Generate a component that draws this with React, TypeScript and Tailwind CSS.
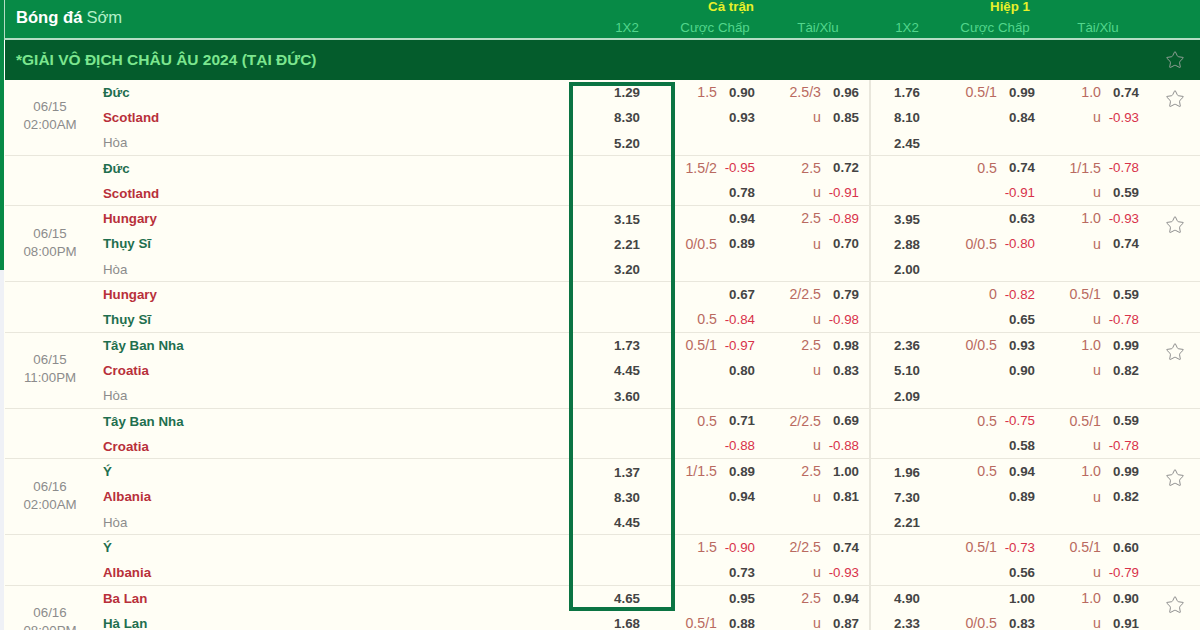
import { Star } from "lucide-react"

type Line = [string, string]

interface Match {
  date?: string
  time?: string
  star?: boolean
  teams: [string, "home" | "away" | "draw"][]
  odds: string[]
  hcp: Line[]
  ou: Line[]
  odds1: string[]
  hcp1: Line[]
  ou1: Line[]
}

const matches: Match[] = [
  {
    date: "06/15", time: "02:00AM", star: true,
    teams: [["Đức", "home"], ["Scotland", "away"], ["Hòa", "draw"]],
    odds: ["1.29", "8.30", "5.20"],
    hcp: [["1.5", "0.90"], ["", "0.93"]],
    ou: [["2.5/3", "0.96"], ["u", "0.85"]],
    odds1: ["1.76", "8.10", "2.45"],
    hcp1: [["0.5/1", "0.99"], ["", "0.84"]],
    ou1: [["1.0", "0.74"], ["u", "-0.93"]],
  },
  {
    teams: [["Đức", "home"], ["Scotland", "away"]],
    odds: [],
    hcp: [["1.5/2", "-0.95"], ["", "0.78"]],
    ou: [["2.5", "0.72"], ["u", "-0.91"]],
    odds1: [],
    hcp1: [["0.5", "0.74"], ["", "-0.91"]],
    ou1: [["1/1.5", "-0.78"], ["u", "0.59"]],
  },
  {
    date: "06/15", time: "08:00PM", star: true,
    teams: [["Hungary", "away"], ["Thụy Sĩ", "home"], ["Hòa", "draw"]],
    odds: ["3.15", "2.21", "3.20"],
    hcp: [["", "0.94"], ["0/0.5", "0.89"]],
    ou: [["2.5", "-0.89"], ["u", "0.70"]],
    odds1: ["3.95", "2.88", "2.00"],
    hcp1: [["", "0.63"], ["0/0.5", "-0.80"]],
    ou1: [["1.0", "-0.93"], ["u", "0.74"]],
  },
  {
    teams: [["Hungary", "away"], ["Thụy Sĩ", "home"]],
    odds: [],
    hcp: [["", "0.67"], ["0.5", "-0.84"]],
    ou: [["2/2.5", "0.79"], ["u", "-0.98"]],
    odds1: [],
    hcp1: [["0", "-0.82"], ["", "0.65"]],
    ou1: [["0.5/1", "0.59"], ["u", "-0.78"]],
  },
  {
    date: "06/15", time: "11:00PM", star: true,
    teams: [["Tây Ban Nha", "home"], ["Croatia", "away"], ["Hòa", "draw"]],
    odds: ["1.73", "4.45", "3.60"],
    hcp: [["0.5/1", "-0.97"], ["", "0.80"]],
    ou: [["2.5", "0.98"], ["u", "0.83"]],
    odds1: ["2.36", "5.10", "2.09"],
    hcp1: [["0/0.5", "0.93"], ["", "0.90"]],
    ou1: [["1.0", "0.99"], ["u", "0.82"]],
  },
  {
    teams: [["Tây Ban Nha", "home"], ["Croatia", "away"]],
    odds: [],
    hcp: [["0.5", "0.71"], ["", "-0.88"]],
    ou: [["2/2.5", "0.69"], ["u", "-0.88"]],
    odds1: [],
    hcp1: [["0.5", "-0.75"], ["", "0.58"]],
    ou1: [["0.5/1", "0.59"], ["u", "-0.78"]],
  },
  {
    date: "06/16", time: "02:00AM", star: true,
    teams: [["Ý", "home"], ["Albania", "away"], ["Hòa", "draw"]],
    odds: ["1.37", "8.30", "4.45"],
    hcp: [["1/1.5", "0.89"], ["", "0.94"]],
    ou: [["2.5", "1.00"], ["u", "0.81"]],
    odds1: ["1.96", "7.30", "2.21"],
    hcp1: [["0.5", "0.94"], ["", "0.89"]],
    ou1: [["1.0", "0.99"], ["u", "0.82"]],
  },
  {
    teams: [["Ý", "home"], ["Albania", "away"]],
    odds: [],
    hcp: [["1.5", "-0.90"], ["", "0.73"]],
    ou: [["2/2.5", "0.74"], ["u", "-0.93"]],
    odds1: [],
    hcp1: [["0.5/1", "-0.73"], ["", "0.56"]],
    ou1: [["0.5/1", "0.60"], ["u", "-0.79"]],
  },
  {
    date: "06/16", time: "08:00PM", star: true,
    teams: [["Ba Lan", "away"], ["Hà Lan", "home"], ["Hòa", "draw"]],
    odds: ["4.65", "1.68"],
    hcp: [["", "0.95"], ["0.5/1", "0.88"]],
    ou: [["2.5", "0.94"], ["u", "0.87"]],
    odds1: ["4.90", "2.33"],
    hcp1: [["", "1.00"], ["0/0.5", "0.83"]],
    ou1: [["1.0", "0.90"], ["u", "0.91"]],
  },
]

const teamColor = {
  home: "font-bold text-[#1f6f4f]",
  away: "font-bold text-[#b8303a]",
  draw: "text-[#8c8c8c]",
}

const Cell = ({ className, children }: { className: string; children?: React.ReactNode }) => (
  <div className={`flex h-[25.3px] shrink-0 items-center ${className}`}>{children}</div>
)

const Price = ({ value }: { value: string }) => (
  <span className={value.startsWith("-") ? "text-[#d8324a]" : "font-bold text-[#444444]"}>{value}</span>
)

const LinePair = ({ lines, lineWidth }: { lines: Line[]; lineWidth: string }) => (
  <div className="flex shrink-0 flex-col">
    {lines.map(([line, price], i) => (
      <div key={i} className="flex h-[25.3px] items-center">
        <span className={`${lineWidth} text-right text-[14.2px] text-[#b96a60]`}>{line}</span>
        <span className="w-[38px] text-right">
          <Price value={price} />
        </span>
      </div>
    ))}
  </div>
)

const OddsColumn = ({ values, width }: { values: string[]; width: string }) => (
  <div className={`flex shrink-0 flex-col pt-[0.5px] ${width}`}>
    {values.map((v, i) => (
      <Cell key={i} className="justify-center font-bold text-[#444444]">{v}</Cell>
    ))}
  </div>
)

const MatchRow = ({ match }: { match: Match }) => (
  <div className={`flex border-b border-[#e9e7dc] ${match.teams.length === 3 ? "h-[75.9px]" : "h-[50.6px]"}`}>
    <div className="flex w-[90px] shrink-0 flex-col items-center justify-center pb-[2px] leading-[18px] text-[#8c8c8c]">
      <span>{match.date}</span>
      <span>{match.time}</span>
    </div>
    <div className="flex w-[487px] shrink-0 flex-col pl-[8px]">
      {match.teams.map(([name, side], i) => (
        <Cell key={i} className={teamColor[side]}>{name}</Cell>
      ))}
    </div>
    <OddsColumn values={match.odds} width="w-[90px]" />
    <LinePair lines={match.hcp} lineWidth="w-[45px]" />
    <LinePair lines={match.ou} lineWidth="w-[66px]" />
    <div className="w-[12px] shrink-0 border-r-2 border-[#e9e7dc]" />
    <OddsColumn values={match.odds1} width="w-[72px]" />
    <LinePair lines={match.hcp1} lineWidth="w-[54px]" />
    <LinePair lines={match.ou1} lineWidth="w-[66px]" />
    <div className="flex flex-1 justify-center pl-[11px] pt-[9px]">
      {match.star && <Star size={20} strokeWidth={1.2} className="text-[#8f8f8f]" />}
    </div>
  </div>
)

export default function App() {
  return (
    <div className="relative flex h-[630px] w-[1200px] overflow-hidden bg-[#eff1f6] font-['Liberation_Sans',Arial,sans-serif] text-[13.3px]">
      <div className="h-[270px] w-[4px] shrink-0 bg-[#078a46]" />
      <div className="flex-1 bg-[#fffef5]">
        <div className="flex h-[40px] border-b-2 border-l border-[#b4dcc4] bg-[#078a46]">
          <div className="flex w-[577px] shrink-0 items-center pb-[2px] pl-[11px] text-[16.6px]">
            <span className="font-bold text-white">Bóng đá</span>
            <span className="ml-[4px] text-[#b4f0c8]">Sớm</span>
          </div>
          <div className="flex flex-1 flex-col">
            <div className="flex h-[13px] items-center font-bold text-[#e8f02a]">
              <span className="w-[298px] text-center">Cả trận</span>
              <span className="w-[260px] text-center">Hiệp 1</span>
            </div>
            <div className="mt-[6px] flex h-[18px] items-center text-[#52d68c]">
              <span className="w-[90px] text-center">1X2</span>
              <span className="w-[86px] text-center">Cược Chấp</span>
              <span className="w-[120px] text-center">Tài/Xỉu</span>
              <span className="w-[58px] text-center">1X2</span>
              <span className="w-[118px] text-center">Cược Chấp</span>
              <span className="w-[88px] text-center">Tài/Xỉu</span>
            </div>
          </div>
        </div>
        <div className="flex h-[40px] items-center justify-between border-l border-white bg-[#045c2c] pl-[11px] pr-[15px]">
          <span className="text-[15.5px] font-bold text-[#7ce68f]">*GIẢI VÔ ĐỊCH CHÂU ÂU 2024 (TẠI ĐỨC)</span>
          <Star size={20} strokeWidth={1.2} className="text-[#8f9f95]" />
        </div>
        <div className="pl-[1px]">
          {matches.map((m, i) => (
            <MatchRow key={i} match={m} />
          ))}
        </div>
      </div>
      {/* highlight around the full-time 1X2 column */}
      <div className="pointer-events-none absolute left-[569px] top-[82px] h-[529px] w-[106px] border-4 border-[#0b7443]" />
    </div>
  )
}
